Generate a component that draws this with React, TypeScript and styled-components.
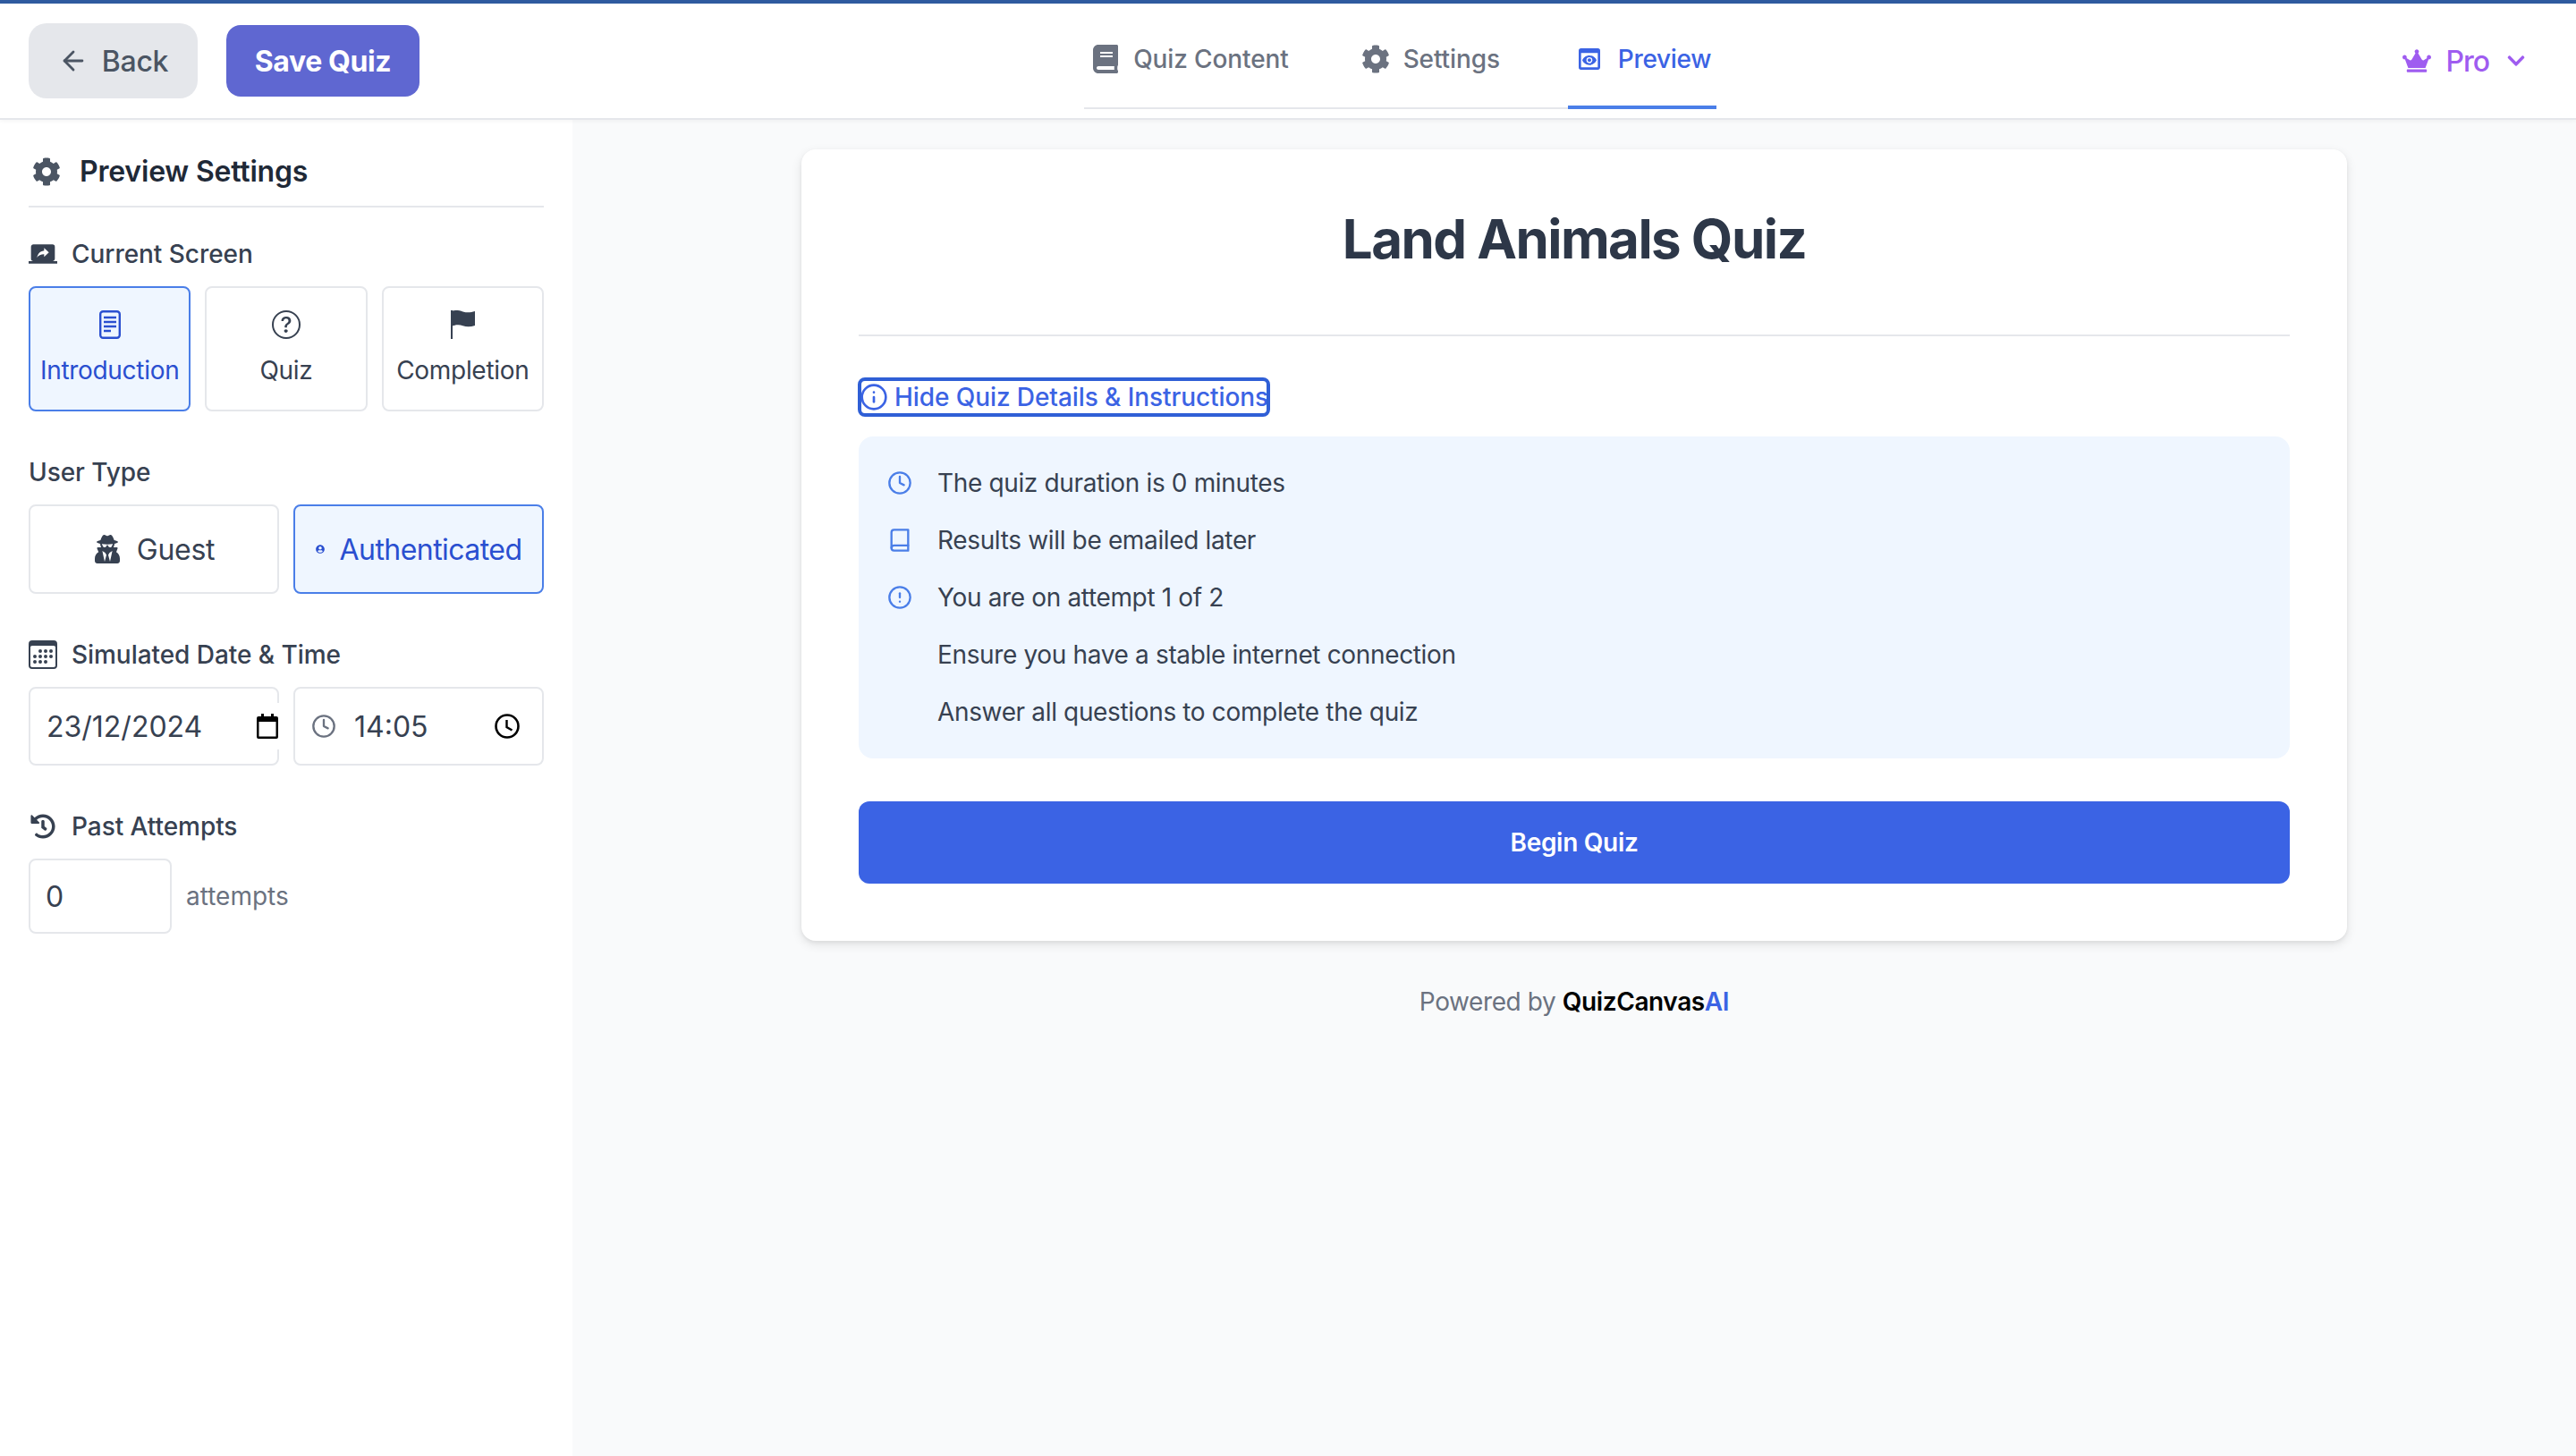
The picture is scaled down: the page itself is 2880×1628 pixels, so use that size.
import React from "react";
import styled, { createGlobalStyle } from "styled-components";
import { FaBook, FaCog, FaCrown, FaChevronDown, FaUserSecret, FaHistory, FaUserCircle } from "react-icons/fa";
import { MdPreview, MdScreenShare } from "react-icons/md";
import { BsCalendar3, BsQuestionCircle } from "react-icons/bs";
import { FiClock, FiBook, FiAlertCircle, FiInfo, FiArrowLeft } from "react-icons/fi";

const Global = createGlobalStyle`
  html, body { margin: 0; padding: 0; background: #f9fafb; }
  * { box-sizing: border-box; }
  body { font-family: Inter, "Liberation Sans", sans-serif; color: #374151; }
`;

const Page = styled.div`
  width: 2880px;
  height: 1628px;
  display: flex;
  flex-direction: column;
  overflow: hidden;
`;

const Header = styled.header`
  height: 134px;
  flex: none;
  background: #fff;
  border-top: 4px solid #2f5b9f;
  border-bottom: 2px solid #e5e7eb;
  box-shadow: 0 2px 4px rgba(0, 0, 0, 0.04);
  padding: 0 32px;
  display: flex;
  align-items: center;
  justify-content: space-between;
  position: relative;
  z-index: 1;
`;

const HeaderLeft = styled.div`
  display: flex;
  align-items: center;
  gap: 32px;
`;

const BackButton = styled.button`
  width: 189px;
  height: 84px;
  padding: 0;
  border: 0;
  border-radius: 20px;
  background: #e5e7eb;
  color: #4b5563;
  font: 500 32px Inter, sans-serif;
  letter-spacing: -0.3px;
  display: flex;
  align-items: center;
  justify-content: center;
  gap: 15px;
  svg { width: 34px; height: 34px; stroke-width: 2; }
`;

const SaveButton = styled.button`
  width: 216px;
  height: 80px;
  padding: 0;
  border: 0;
  border-radius: 16px;
  background: #5f67d1;
  color: #fff;
  font: 700 32px Inter, sans-serif;
  letter-spacing: -0.4px;
`;

const Tabs = styled.nav`
  display: flex;
  gap: 63px;
  align-self: flex-start;
  border-bottom: 2px solid #e5e7eb;
  width: 707px;
  height: 118px;
`;

const Tab = styled.div`
  padding: 5px 10px 0 8px;
  height: 118px;
  display: flex;
  align-items: center;
  gap: 15px;
  font-size: 28px;
  font-weight: 500;
  line-height: 40px;
  letter-spacing: -0.12px;
  white-space: nowrap;
  color: #6b7280;
  svg { flex: none; }
`;

const ActiveTab = styled(Tab)`
  margin-left: auto;
  padding: 9px 6px 0 8px;
  gap: 16px;
  letter-spacing: -0.3px;
  color: #3b63e4;
  border-bottom: 4px solid #4a7ee8;
`;

const ProButton = styled.div`
  padding: 0 24px;
  display: flex;
  align-items: center;
  color: #9f5cf0;
  font-size: 32px;
  font-weight: 500;
  letter-spacing: -1px;
`;

const ProLabel = styled.span`
  margin: 0 19px 0 16px;
`;

const Body = styled.div`
  flex: 1;
  display: flex;
  min-height: 0;
`;

const Sidebar = styled.aside`
  width: 640px;
  flex: none;
  background: #fff;
  padding: 28px 32px 0;
`;

const SidebarTitle = styled.h2`
  margin: 0;
  height: 70px;
  padding: 3px 0 11px 4px;
  border-bottom: 2px solid #e5e7eb;
  display: flex;
  align-items: center;
  gap: 21px;
  font-size: 32px;
  font-weight: 600;
  line-height: 56px;
  letter-spacing: -0.2px;
  color: #1f2937;
  svg { color: #4b5563; }
`;

const Section = styled.section<{ $first?: boolean }>`
  margin-top: ${(p) => (p.$first ? "32px" : "48px")};
`;

const SectionLabel = styled.div`
  height: 40px;
  margin-bottom: 16px;
  display: flex;
  align-items: center;
  gap: 16px;
  font-size: 28px;
  font-weight: 500;
  letter-spacing: -0.05px;
  color: #374151;
`;

const LabelIcon = styled.span`
  width: 32px;
  height: 32px;
  flex: none;
  display: flex;
  align-items: center;
  justify-content: center;
`;

const ScreenGrid = styled.div`
  display: grid;
  grid-template-columns: repeat(3, 1fr);
  gap: 16px;
`;

const ScreenCard = styled.div<{ $active?: boolean }>`
  height: 140px;
  padding-top: 25px;
  border: 2px solid ${(p) => (p.$active ? "#4a7ee8" : "#e5e7eb")};
  border-radius: 8px;
  background: ${(p) => (p.$active ? "#eff6ff" : "#fff")};
  color: ${(p) => (p.$active ? "#2a4fd0" : "#374151")};
  display: flex;
  flex-direction: column;
  align-items: center;
  gap: 15px;
  font-size: 28px;
  line-height: 40px;
  letter-spacing: -0.3px;
  svg { height: 32px; flex: none; }
`;

const TwoCols = styled.div`
  display: grid;
  grid-template-columns: 1fr 1fr;
  gap: 16px;
`;

const UserButton = styled.div<{ $active?: boolean }>`
  height: 100px;
  border: 2px solid ${(p) => (p.$active ? "#4a7ee8" : "#e5e7eb")};
  border-radius: 8px;
  background: ${(p) => (p.$active ? "#eff6ff" : "#fff")};
  color: ${(p) => (p.$active ? "#2a4fd0" : "#374151")};
  display: flex;
  align-items: center;
  justify-content: center;
  gap: 17px;
  font-size: 32px;
  letter-spacing: ${(p) => (p.$active ? "-0.55px" : "-0.3px")};
`;

const InputBox = styled.div`
  height: 88px;
  border: 2px solid #e5e7eb;
  border-radius: 8px;
  background: #fff;
  display: flex;
  align-items: center;
  font-size: 32px;
  color: #374151;
`;

const DateText = styled.span`
  margin-left: 18px;
  flex: 1;
`;

const DatePicker = styled.span`
  height: 52px;
  width: 26px;
  margin-right: -2px;
  background: #fff;
  display: flex;
  align-items: center;
  justify-content: center;
`;

const TimeText = styled.span`
  flex: 1;
  margin-left: 20px;
`;

const TimeIcon = styled(FiClock)`
  margin-left: 18px;
  width: 28px;
  height: 28px;
  color: #6b7280;
`;

const TimePicker = styled.svg`
  margin-right: 25px;
`;

const AttemptsRow = styled.div`
  display: flex;
  align-items: center;
  gap: 16px;
`;

const AttemptsInput = styled(InputBox)`
  width: 160px;
  height: 84px;
  padding-left: 17px;
`;

const AttemptsUnit = styled.span`
  font-size: 28px;
  color: #6b7280;
`;

const Main = styled.main`
  flex: 1;
  padding-top: 33px;
  background: #f9fafb;
  display: flex;
  flex-direction: column;
  align-items: center;
`;

const Card = styled.div`
  width: 1728px;
  padding: 64px;
  background: #fff;
  border-radius: 16px;
  box-shadow: 0 4px 12px rgba(0, 0, 0, 0.1), 0 2px 4px rgba(0, 0, 0, 0.05);
`;

const Title = styled.h1`
  margin: 0;
  height: 145px;
  padding-bottom: 71px;
  border-bottom: 2px solid #e5e7eb;
  font-size: 60px;
  font-weight: 700;
  line-height: 72px;
  letter-spacing: -1.55px;
  text-align: center;
  color: #2d3748;
`;

const DetailsLink = styled.div`
  margin: 50px 0 0 3px;
  width: 453px;
  height: 36px;
  outline: 4px solid #2f5fd6;
  border-radius: 4px;
  display: flex;
  align-items: center;
  gap: 7px;
  font-size: 28px;
  font-weight: 500;
  letter-spacing: -0.08px;
  color: #3b63e4;
  white-space: nowrap;
  svg { margin-left: -2px; flex: none; }
`;

const InfoBox = styled.div`
  margin-top: 26px;
  padding: 32px;
  height: 360px;
  background: #eff6ff;
  border-radius: 16px;
  display: flex;
  flex-direction: column;
  gap: 24px;
`;

const InfoRow = styled.div`
  height: 40px;
  display: flex;
  align-items: center;
  gap: 28px;
  font-size: 28px;
  line-height: 40px;
  letter-spacing: -0.35px;
  color: #374151;
`;

const InfoIcon = styled.span`
  width: 28px;
  height: 28px;
  flex: none;
  color: #4a7ee8;
  display: flex;
  svg { width: 28px; height: 28px; }
`;

const BeginButton = styled.button`
  margin-top: 48px;
  width: 100%;
  height: 92px;
  border: 0;
  border-radius: 12px;
  background: #3b63e4;
  color: #fff;
  font: 600 28px Inter, sans-serif;
  letter-spacing: -0.3px;
`;

const Footer = styled.div`
  margin-top: 48px;
  font-size: 28px;
  line-height: 40px;
  letter-spacing: -0.4px;
  color: #6b7280;
`;

const Brand = styled.strong`
  font-weight: 600;
  color: #000;
`;

const BrandAccent = styled.span`
  color: #3b63e4;
`;

const DocIcon = () => (
  <svg width="24" height="32" viewBox="0 0 24 32" fill="none" stroke="currentColor" strokeWidth="2.4">
    <rect x="1.2" y="1.2" width="21.6" height="29.6" rx="3" />
    <path d="M5 8h14M5 13h14M5 18h14M5 23h8" />
  </svg>
);

const FlagIcon = () => (
  <svg width="27" height="32" viewBox="0 0 27 32" fill="currentColor">
    <rect x="0" y="0" width="2" height="32" />
    <path d="M0 1c5-1.6 9-1 13.500 .4s8.500 1.200 13.500-.4v16c-5 1.600-9.500 1.600-13.500 .2S5 16 0 18z" />
  </svg>
);

export default function App() {
  return (
    <Page>
      <Global />
      <Header>
        <HeaderLeft>
          <BackButton><FiArrowLeft />Back</BackButton>
          <SaveButton>Save Quiz</SaveButton>
        </HeaderLeft>
        <Tabs>
          <Tab><FaBook size={32} />Quiz Content</Tab>
          <Tab><FaCog size={32} />Settings</Tab>
          <ActiveTab><MdPreview size={32} />Preview</ActiveTab>
        </Tabs>
        <ProButton>
          <FaCrown size={32} />
          <ProLabel>Pro</ProLabel>
          <FaChevronDown size={22} />
        </ProButton>
      </Header>
      <Body>
        <Sidebar>
          <SidebarTitle><FaCog size={32} />Preview Settings</SidebarTitle>
          <Section $first>
            <SectionLabel><LabelIcon><MdScreenShare size={36} /></LabelIcon>Current Screen</SectionLabel>
            <ScreenGrid>
              <ScreenCard $active><DocIcon />Introduction</ScreenCard>
              <ScreenCard><BsQuestionCircle size={32} />Quiz</ScreenCard>
              <ScreenCard><FlagIcon />Completion</ScreenCard>
            </ScreenGrid>
          </Section>
          <Section>
            <SectionLabel>User Type</SectionLabel>
            <TwoCols>
              <UserButton><FaUserSecret size={32} />Guest</UserButton>
              <UserButton $active>
                <FaUserCircle size={10} />
                Authenticated
              </UserButton>
            </TwoCols>
          </Section>
          <Section>
            <SectionLabel><LabelIcon><BsCalendar3 size={32} /></LabelIcon>Simulated Date &amp; Time</SectionLabel>
            <TwoCols>
              <InputBox>
                <DateText>23/12/2024</DateText>
                <DatePicker>
                  <svg width="24" height="28" viewBox="0 0 24 28">
                    <path d="M5 0h3v3h8V0h3v3h3a2 2 0 0 1 2 2v21a2 2 0 0 1-2 2H2a2 2 0 0 1-2-2V5a2 2 0 0 1 2-2h3zM2.500 9v16.500h19V9z" fill="#000" />
                  </svg>
                </DatePicker>
              </InputBox>
              <InputBox>
                <TimeIcon />
                <TimeText>14:05</TimeText>
                <TimePicker width="28" height="28" viewBox="0 0 28 28">
                  <circle cx="14" cy="14" r="12.500" fill="none" stroke="#000" strokeWidth="2.600" />
                  <path d="M13.500 7v8l6 3.500" fill="none" stroke="#000" strokeWidth="2.400" />
                </TimePicker>
              </InputBox>
            </TwoCols>
          </Section>
          <Section>
            <SectionLabel><LabelIcon><FaHistory size={28} /></LabelIcon>Past Attempts</SectionLabel>
            <AttemptsRow>
              <AttemptsInput>0</AttemptsInput>
              <AttemptsUnit>attempts</AttemptsUnit>
            </AttemptsRow>
          </Section>
        </Sidebar>
        <Main>
          <Card>
            <Title>Land Animals Quiz</Title>
            <DetailsLink><FiInfo size={32} />Hide Quiz Details &amp; Instructions</DetailsLink>
            <InfoBox>
              <InfoRow><InfoIcon><FiClock /></InfoIcon>The quiz duration is 0 minutes</InfoRow>
              <InfoRow><InfoIcon><FiBook /></InfoIcon>Results will be emailed later</InfoRow>
              <InfoRow><InfoIcon><FiAlertCircle /></InfoIcon>You are on attempt 1 of 2</InfoRow>
              <InfoRow><InfoIcon />Ensure you have a stable internet connection</InfoRow>
              <InfoRow><InfoIcon />Answer all questions to complete the quiz</InfoRow>
            </InfoBox>
            <BeginButton>Begin Quiz</BeginButton>
          </Card>
          <Footer>Powered by <Brand>QuizCanvas<BrandAccent>AI</BrandAccent></Brand></Footer>
        </Main>
      </Body>
    </Page>
  );
}
